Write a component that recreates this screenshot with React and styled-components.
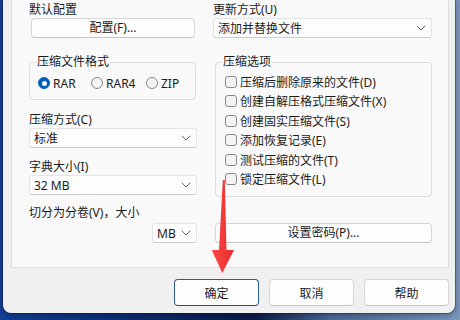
import React from "react";
import styled, { createGlobalStyle } from "styled-components";

const GlobalStyle = createGlobalStyle`
  html, body {
    margin: 0;
    padding: 0;
  }
  body {
    width: 460px;
    height: 320px;
    overflow: hidden;
    font-family: "Noto Sans", "Noto Sans CJK SC", sans-serif;
    font-size: 12px;
    color: #1b1b1b;
  }
`;

const Desktop = styled.div`
  position: relative;
  width: 460px;
  height: 320px;
  overflow: hidden;
  background: linear-gradient(
    90deg,
    #123f98 0%,
    #0e2f78 25%,
    #0a1b48 55%,
    #4a6a98 72%,
    #7a97bc 100%
  );
`;

const Window = styled.div`
  margin-left: 3px;
  width: 452px;
  height: 313px;
  box-sizing: border-box;
  padding: 0 6px 0 8px;
  background: #f0f0f0;
  border-radius: 0 0 8px 8px;
  box-shadow: 0 0 0 1px rgba(20, 30, 60, 0.35), 0 2px 6px rgba(0, 0, 0, 0.35);
  display: flex;
  flex-direction: column;
`;

const TabPage = styled.div`
  height: 268px;
  box-sizing: border-box;
  background: #f9f9f9;
  border: 1px solid #dedede;
  border-top: none;
  padding: 2px 16px 0 17px;
  display: flex;
  gap: 16px;
`;

const Column = styled.div`
  display: flex;
  flex-direction: column;
  width: ${(p) => p.$width}px;
`;

const Label = styled.div`
  height: 16px;
  line-height: 16px;
  margin-top: ${(p) => p.$top || 0}px;
  white-space: nowrap;
`;

const PushButton = styled.button`
  height: 20px;
  margin: ${(p) => p.$top || 0}px 0 0 ${(p) => p.$inset || 2}px;
  margin-right: ${(p) => (p.$inset ? 0 : 2)}px;
  padding: 0;
  box-sizing: border-box;
  background: #fdfdfd;
  border: 1px solid #d6d6d6;
  border-bottom-color: #c4c4c4;
  border-radius: 4px;
  font: inherit;
  color: inherit;
  line-height: 18px;
`;

const Select = styled.div`
  height: 20px;
  margin-top: ${(p) => p.$top || 0}px;
  box-sizing: border-box;
  display: flex;
  align-items: center;
  justify-content: space-between;
  padding: 0 5px 0 4px;
  background: #fdfdfd;
  border: 1px solid #e4e4e4;
  border-bottom-color: #cdcdcd;
  border-radius: 3px;
  width: ${(p) => (p.$width ? `${p.$width}px` : "auto")};
  align-self: ${(p) => (p.$width ? "flex-end" : "stretch")};
  white-space: nowrap;
`;

const Chevron = styled.svg`
  flex: none;
  stroke: #606060;
  fill: none;
`;

const Group = styled.fieldset`
  margin: 17px ${(p) => p.$right || 0}px 0 ${(p) => p.$left || 0}px;
  padding: 0 6px ${(p) => p.$bottom}px;
  border: 1px solid #dcdcdc;
  border-radius: 4px;
  min-width: 0;
`;

const Legend = styled.legend`
  padding: 0 1px;
  line-height: 14px;
  font-size: 12px;
`;

const RadioRow = styled.div`
  display: flex;
  align-items: center;
  height: 16px;
  margin: 6px 0 0 2px;
`;

const RadioItem = styled.label`
  display: flex;
  align-items: center;
  gap: 3px;
  width: ${(p) => (p.$width ? `${p.$width}px` : "auto")};
`;

const RadioDot = styled.span`
  width: 12px;
  height: 12px;
  box-sizing: border-box;
  border-radius: 50%;
  border: 1px solid ${(p) => (p.$checked ? "#005fb8" : "#858585")};
  background: ${(p) => (p.$checked ? "#005fb8" : "#f5f5f5")};
  display: flex;
  align-items: center;
  justify-content: center;

  &::after {
    content: "";
    display: ${(p) => (p.$checked ? "block" : "none")};
    width: 5px;
    height: 5px;
    border-radius: 50%;
    background: #fff;
  }
`;

const CheckList = styled.div`
  margin-top: 3px;
  display: flex;
  flex-direction: column;
`;

const CheckRow = styled.label`
  height: 19.5px;
  display: flex;
  align-items: center;
  gap: 3px;
  margin-left: 3px;
  white-space: nowrap;
`;

const CheckBox = styled.span`
  width: 12px;
  height: 12px;
  box-sizing: border-box;
  border: 1px solid #8a8a8a;
  border-radius: 3px;
  background: #f4f4f4;
`;

const Footer = styled.div`
  display: flex;
  justify-content: flex-end;
  gap: 10px;
  padding-top: 11px;
`;

const DialogButton = styled.button`
  width: 85px;
  height: 27px;
  padding: 0;
  box-sizing: border-box;
  background: #fdfdfd;
  border: 1px solid ${(p) => (p.$default ? "#2c5d91" : "#d6d6d6")};
  border-bottom-color: ${(p) => (p.$default ? "#214f80" : "#c4c4c4")};
  border-radius: 4px;
  font: inherit;
  color: inherit;
`;

const Overlay = styled.svg`
  position: absolute;
  left: 0;
  top: 0;
  pointer-events: none;
`;

const options = [
  "压缩后删除原来的文件(D)",
  "创建自解压格式压缩文件(X)",
  "创建固实压缩文件(S)",
  "添加恢复记录(E)",
  "测试压缩的文件(T)",
  "锁定压缩文件(L)",
];

const formats = [
  { name: "RAR", checked: true, width: 53 },
  { name: "RAR4", width: 55 },
  { name: "ZIP" },
];

function Dropdown({ value, top, width }) {
  return (
    <Select $top={top} $width={width}>
      <span>{value}</span>
      <Chevron width="10" height="6" viewBox="0 0 10 6">
        <path d="M0.8 0.8 L5 5 L9.2 0.8" strokeWidth="1" />
      </Chevron>
    </Select>
  );
}

export default function App() {
  return (
    <Desktop>
      <GlobalStyle />
      <Window>
        <TabPage>
          <Column $width={168}>
            <Label>默认配置</Label>
            <PushButton>配置(F)...</PushButton>
            <Group $bottom={8} $right={1}>
              <Legend>压缩文件格式</Legend>
              <RadioRow>
                {formats.map((f) => (
                  <RadioItem key={f.name} $width={f.width}>
                    <RadioDot $checked={f.checked} />
                    {f.name}
                  </RadioItem>
                ))}
              </RadioRow>
            </Group>
            <Label $top={12}>压缩方式(C)</Label>
            <Dropdown value="标准" />
            <Label $top={11}>字典大小(I)</Label>
            <Dropdown value="32 MB" />
            <Label $top={10}>切分为分卷(V)，大小</Label>
            <Dropdown value="MB" top={2} width={45} />
          </Column>

          <Column $width={219}>
            <Label>更新方式(U)</Label>
            <Dropdown value="添加并替换文件" />
            <Group $bottom={7} $left={2}>
              <Legend>压缩选项</Legend>
              <CheckList>
                {options.map((o) => (
                  <CheckRow key={o}>
                    <CheckBox />
                    {o}
                  </CheckRow>
                ))}
              </CheckList>
            </Group>
            <PushButton $top={26} $inset={2}>
              设置密码(P)...
            </PushButton>
          </Column>
        </TabPage>

        <Footer>
          <DialogButton $default>确定</DialogButton>
          <DialogButton>取消</DialogButton>
          <DialogButton>帮助</DialogButton>
        </Footer>
      </Window>

      <Overlay width="460" height="320" viewBox="0 0 460 320">
        <defs>
          <linearGradient id="arrowRed" x1="0" y1="0" x2="1" y2="0">
            <stop offset="0" stopColor="#ff4a4a" />
            <stop offset="1" stopColor="#e62b2b" />
          </linearGradient>
        </defs>
        <polygon
          points="222.8,180 224.8,180 226.5,250 234,250 222.3,273 211.7,250 219,250"
          fill="url(#arrowRed)"
        />
      </Overlay>
    </Desktop>
  );
}
